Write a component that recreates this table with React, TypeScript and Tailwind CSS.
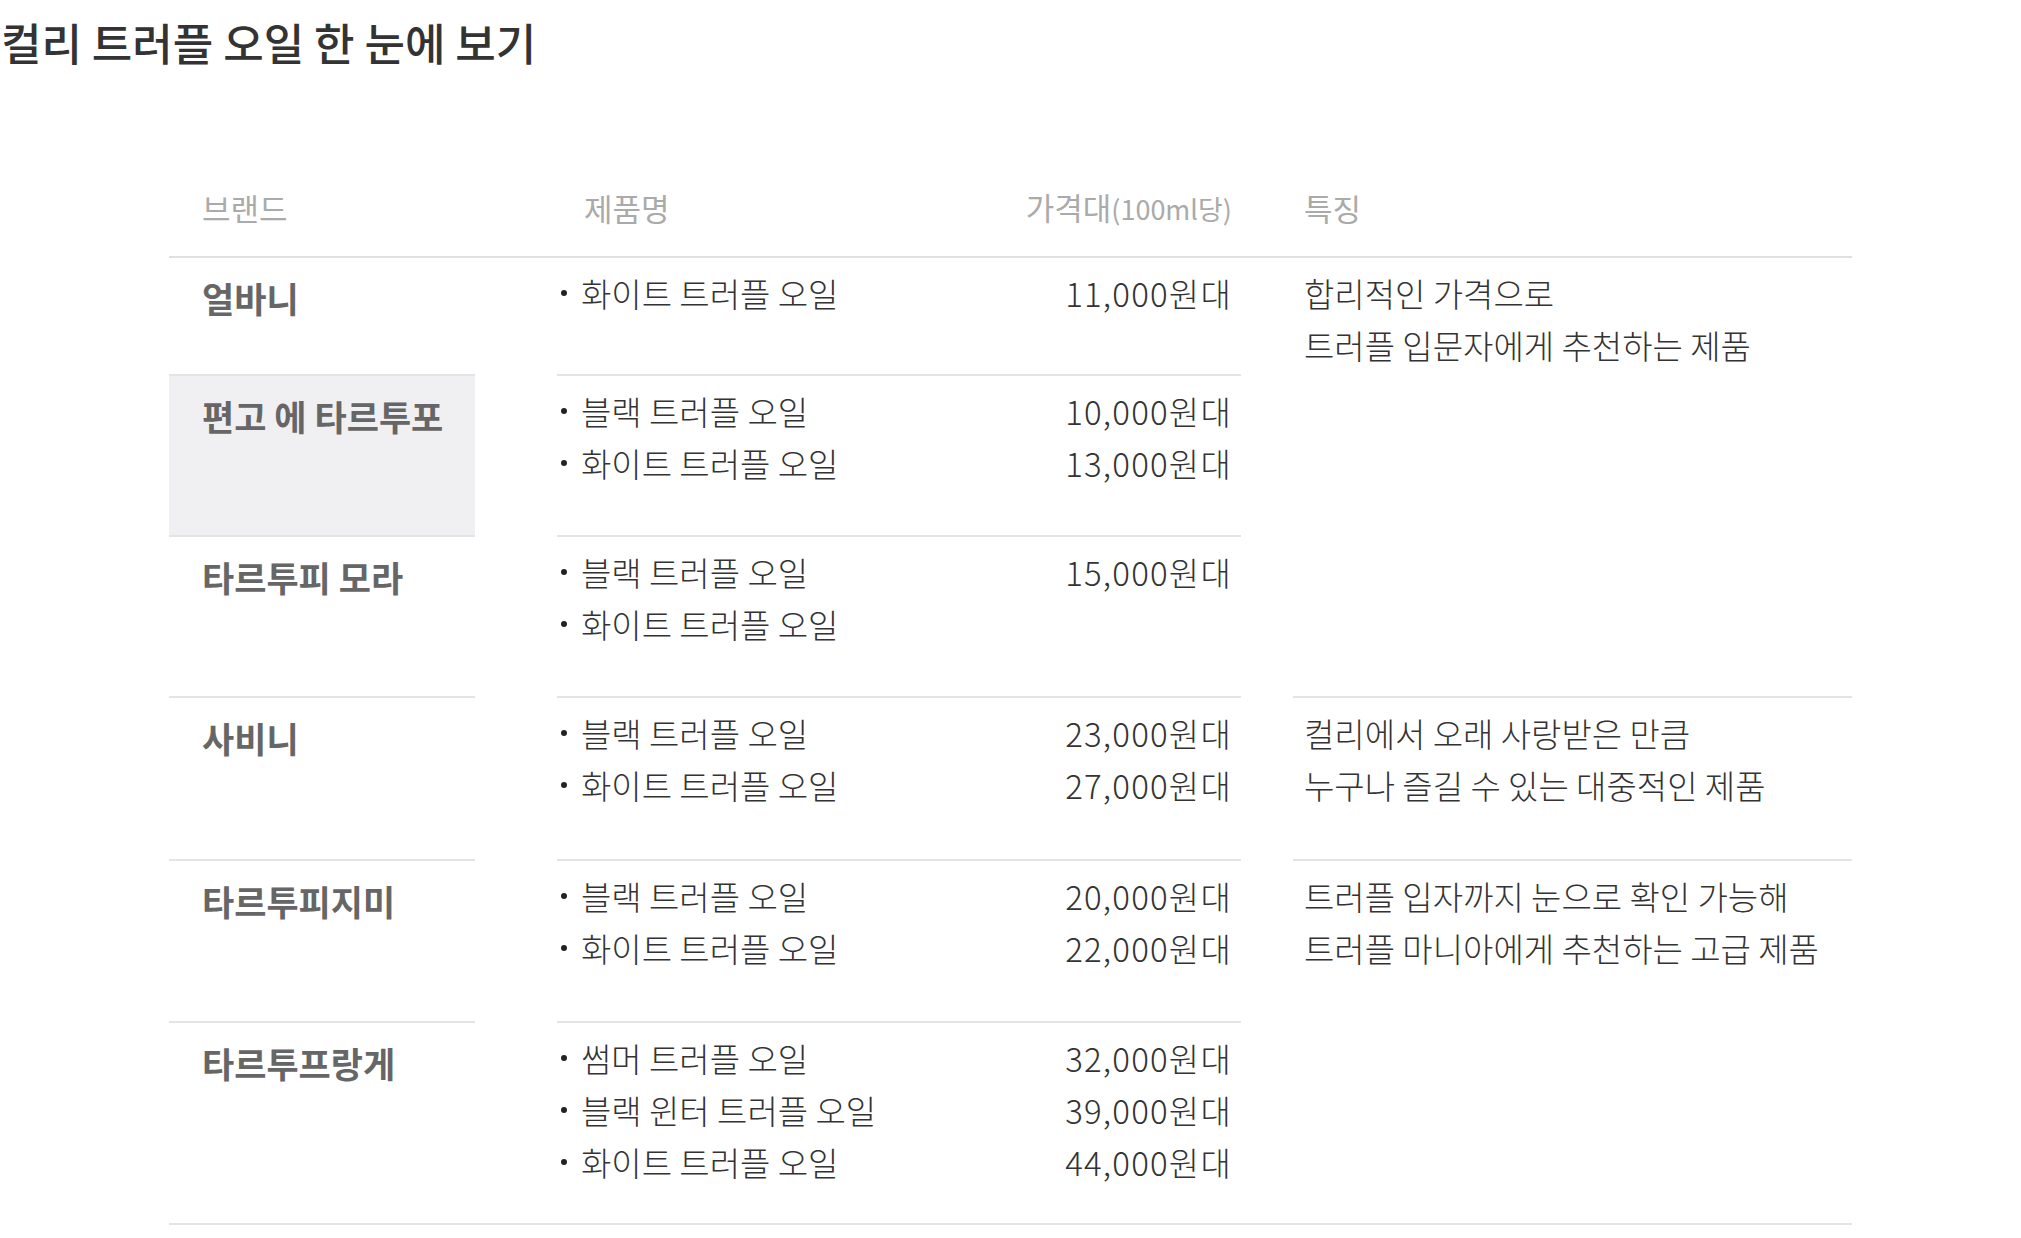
const products = [
  {
    brand: "얼바니",
    gray: false,
    first: true,
    items: [["화이트 트러플 오일", "11,000원대"]],
  },
  {
    brand: "편고 에 타르투포",
    gray: true,
    first: false,
    items: [
      ["블랙 트러플 오일", "10,000원대"],
      ["화이트 트러플 오일", "13,000원대"],
    ],
  },
  {
    brand: "타르투피 모라",
    gray: false,
    first: false,
    items: [
      ["블랙 트러플 오일", "15,000원대"],
      ["화이트 트러플 오일", ""],
    ],
  },
  {
    brand: "사비니",
    gray: false,
    first: false,
    items: [
      ["블랙 트러플 오일", "23,000원대"],
      ["화이트 트러플 오일", "27,000원대"],
    ],
  },
  {
    brand: "타르투피지미",
    gray: false,
    first: false,
    items: [
      ["블랙 트러플 오일", "20,000원대"],
      ["화이트 트러플 오일", "22,000원대"],
    ],
  },
  {
    brand: "타르투프랑게",
    gray: false,
    first: false,
    items: [
      ["썸머 트러플 오일", "32,000원대"],
      ["블랙 윈터 트러플 오일", "39,000원대"],
      ["화이트 트러플 오일", "44,000원대"],
    ],
  },
];

const features = [
  {
    place: "row-start-1 row-span-3",
    border: "",
    lines: ["합리적인 가격으로", "트러플 입문자에게 추천하는 제품"],
  },
  {
    place: "row-start-4 row-span-1",
    border: "border-t-2 border-[#e4e4e4]",
    lines: ["컬리에서 오래 사랑받은 만큼", "누구나 즐길 수 있는 대중적인 제품"],
  },
  {
    place: "row-start-5 row-span-2",
    border: "border-t-2 border-[#e4e4e4]",
    lines: ["트러플 입자까지 눈으로 확인 가능해", "트러플 마니아에게 추천하는 고급 제품"],
  },
];

const rowStarts = [
  "row-start-1",
  "row-start-2",
  "row-start-3",
  "row-start-4",
  "row-start-5",
  "row-start-6",
];

export default function App() {
  return (
    <div className="min-h-screen bg-white font-['Noto_Sans_CJK_KR',sans-serif] text-[#333]">
      <h1 className="pl-[1px] pt-[12px] text-[44px] font-medium leading-[60px] text-[#333]">
        컬리 트러플 오일 한 눈에 보기
      </h1>

      <div className="ml-[169px] mt-[88px] w-[1683px]">
        {/* header */}
        <div className="grid h-[98px] grid-cols-[306px_82px_684px_52px_559px] items-center border-b-2 border-[#e0e0e0] text-[31px] leading-[40px] text-[#aaa]">
          <div className="col-start-1 row-start-1 pl-[33px]">브랜드</div>
          <div className="col-start-3 row-start-1 pl-[27px]">제품명</div>
          <div className="col-start-3 row-start-1 pr-[9px] text-right">
            가격대<span className="text-[27px]">(100ml당)</span>
          </div>
          <div className="col-start-5 row-start-1 pl-[11px]">특징</div>
        </div>

        {/* body */}
        <div className="grid grid-cols-[306px_82px_684px_52px_559px] grid-rows-[116px_161px_161px_163px_162px_202px] border-b-2 border-[#e4e4e4]">
          {products.map((p, i) => (
            <div
              key={p.brand}
              className={`col-start-1 ${rowStarts[i]} pl-[33px] pt-[14px] text-[35px] font-bold leading-[52px] text-[#666] ${
                p.first ? "" : "border-t-2 border-[#e4e4e4]"
              } ${p.gray ? "bg-[#f0eff2]" : ""}`}
            >
              {p.brand}
            </div>
          ))}

          {products.map((p, i) => (
            <div
              key={p.brand + "-items"}
              className={`col-start-3 ${rowStarts[i]} pr-[9px] pt-[9px] text-[33px] font-light leading-[52px] ${
                p.first ? "" : "border-t-2 border-[#e4e4e4]"
              }`}
            >
              {p.items.map(([name, price]) => (
                <div key={name} className="flex items-center justify-between">
                  <div className="flex items-center">
                    <span className="ml-[4px] mr-[14px] h-[6px] w-[6px] rounded-full bg-[#222]" />
                    <span>{name}</span>
                  </div>
                  <span className="tracking-[1.2px]">{price}</span>
                </div>
              ))}
            </div>
          ))}

          {features.map((f) => (
            <div
              key={f.lines[0]}
              className={`col-start-5 ${f.place} ${f.border} pl-[11px] pt-[9px] text-[33px] font-light leading-[52px]`}
            >
              {f.lines.map((l) => (
                <div key={l}>{l}</div>
              ))}
            </div>
          ))}
        </div>
      </div>
    </div>
  );
}
